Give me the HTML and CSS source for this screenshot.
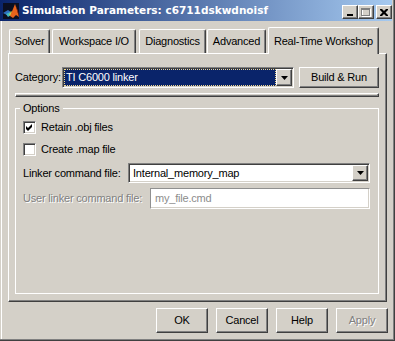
FILE: index.html
```html
<!DOCTYPE html>
<html>
<head>
<meta charset="utf-8">
<title>Simulation Parameters</title>
<link rel="stylesheet" href="styles.css">
</head>
<body>
<div class="window">
  <div class="titlebar">
    <svg class="app-icon" width="16" height="16" viewBox="0 0 16 16">
      <rect width="16" height="16" fill="#0b0f20"/>
      <path d="M0 10 L5 7 L8 9 L4 12 Z" fill="#2f6fc0"/>
      <path d="M3 11 L7 9 L8 12 L5 14 Z" fill="#3fb6c0"/>
      <path d="M6 12 L8 8 L9 9 L8 13 Z" fill="#c8d040"/>
      <path d="M7 13 L10 6 L12 1 L14 7 L16 14 L13 12 L10 15 Z" fill="#e8641c"/>
      <path d="M12 1 L14 7 L16 14 L15 8 Z" fill="#b02a10"/>
    </svg>
    <span class="title-text">Simulation Parameters: c6711dskwdnoisf</span>
    <div class="title-buttons">
      <div class="tb-btn">
        <svg width="8" height="7" viewBox="0 0 8 7"><rect x="1" y="5" width="6" height="2" fill="#000"/></svg>
      </div>
      <div class="tb-btn">
        <svg width="10" height="9" viewBox="0 0 10 9">
          <rect x="1.5" y="1.5" width="8" height="7" fill="none" stroke="#fff"/>
          <rect x="0.5" y="0.5" width="8" height="7" fill="none" stroke="#808080"/>
          <rect x="0" y="1" width="9" height="1" fill="#808080"/>
        </svg>
      </div>
      <div class="tb-btn tb-close">
        <svg width="8" height="7" viewBox="0 0 8 7"><path d="M0 0h2l2 2 2-2h2v1L5.5 3.5 8 6v1H6L4 5 2 7H0V6l2.5-2.5L0 1z" fill="#000"/></svg>
      </div>
    </div>
  </div>

  <div class="tabs">
    <div class="tab tab-solver">Solver</div>
    <div class="tab tab-ws">Workspace I/O</div>
    <div class="tab tab-diag">Diagnostics</div>
    <div class="tab tab-adv">Advanced</div>
    <div class="tab tab-rtw active">Real-Time Workshop</div>
  </div>

  <div class="panel">
    <div class="cat-row">
      <span class="cat-label">Category:</span>
      <div class="combo cat-combo">
        <div class="combo-value selected">TI C6000 linker</div>
        <div class="combo-arrow">
          <svg width="7" height="4" viewBox="0 0 7 4"><path d="M0 0h7L3.5 4z" fill="#000"/></svg>
        </div>
      </div>
      <div class="btn build-btn">Build &amp; Run</div>
    </div>

    <div class="separator"></div>

    <fieldset class="options">
      <legend>Options</legend>
      <div class="check-row first">
        <span class="checkbox">
          <svg width="9" height="9" viewBox="0 0 9 9"><polygon points="1,3 3,5 7,1 7,4 3,8 1,6" fill="#000"/></svg>
        </span>
        <span>Retain .obj files</span>
      </div>
      <div class="check-row">
        <span class="checkbox"></span>
        <span>Create .map file</span>
      </div>
      <div class="field-row linker-row">
        <span class="linker-label">Linker command file:</span>
        <div class="combo linker-combo">
          <div class="combo-value">Internal_memory_map</div>
          <div class="combo-arrow">
            <svg width="7" height="4" viewBox="0 0 7 4"><path d="M0 0h7L3.5 4z" fill="#000"/></svg>
          </div>
        </div>
      </div>
      <div class="field-row user-row">
        <span class="user-label disabled">User linker command file:</span>
        <div class="textfield">my_file.cmd</div>
      </div>
    </fieldset>
  </div>

  <div class="buttons">
    <div class="btn">OK</div>
    <div class="btn">Cancel</div>
    <div class="btn">Help</div>
    <div class="btn disabled">Apply</div>
  </div>
</div>
</body>
</html>
```

FILE: styles.css
```css
* {
  box-sizing: border-box;
}

html,
body {
  margin: 0;
  padding: 0;
}

body {
  width: 395px;
  height: 341px;
  overflow: hidden;
  background: #d4d0c8;
  font-family: "Liberation Sans", Arial, sans-serif;
  font-size: 11px;
  line-height: 13px;
  letter-spacing: -0.2px;
  color: #000;
}

.window {
  width: 395px;
  height: 341px;
  background: #d4d0c8;
  border-right: 1px solid #404040;
  border-bottom: 1px solid #404040;
  box-shadow: inset -1px -1px #808080, inset 1px 0 #d4d0c8, inset 2px 0 #ffffff;
  display: flex;
  flex-direction: column;
}

/* Title bar */
.titlebar {
  height: 21px;
  margin-right: 2px;
  padding-left: 3px;
  background: linear-gradient(to right, #0a246a, #a6caf0);
  display: flex;
  align-items: center;
  color: #fff;
  font-family: "DejaVu Sans", sans-serif;
  font-weight: bold;
  font-size: 10.5px;
  letter-spacing: 0;
}

.app-icon {
  flex: none;
  margin-right: 3px;
}

.title-text {
  flex: 1;
  white-space: nowrap;
}

.title-buttons {
  display: flex;
  align-self: flex-start;
  margin-top: 5px;
}

.tb-btn {
  width: 16px;
  height: 14px;
  background: #d4d0c8;
  border: 1px solid;
  border-color: #fff #404040 #404040 #fff;
  box-shadow: inset -1px -1px #808080;
  display: flex;
  align-items: center;
  justify-content: center;
}

.tb-close {
  margin-left: 2px;
}

/* Tabs */
.tabs {
  display: flex;
  align-items: flex-end;
  height: 26px;
  margin-top: 6px;
  padding-left: 9px;
}

.tab {
  height: 24px;
  padding-top: 5px;
  background: #d4d0c8;
  border-left: 1px solid #fff;
  border-top: 1px solid #fff;
  border-right: 1px solid #404040;
  border-top-left-radius: 2px;
  border-top-right-radius: 2px;
  box-shadow: inset -1px 0 #808080;
  text-align: center;
  white-space: nowrap;
}

.tab-solver { width: 41px; }
.tab-ws { width: 84px; margin-left: 2px; }
.tab-diag { width: 67px; margin-left: 3px; }
.tab-adv { width: 59px; margin-left: 1px; }
.tab-rtw { width: 111px; margin-left: 2px; }

.tab.active {
  height: 27px;
  padding-top: 7px;
  margin-bottom: -1px;
  position: relative;
  z-index: 1;
}

/* Panel */
.panel {
  margin-left: 8px;
  width: 379px;
  height: 249px;
  border-left: 1px solid #fff;
  border-top: 1px solid #fff;
  border-right: 1px solid #404040;
  border-bottom: 1px solid #404040;
  box-shadow: inset -1px -1px #808080;
  padding: 13px 0 0 6px;
}

.cat-row {
  display: flex;
  align-items: center;
  height: 21px;
}

.cat-label {
  width: 47px;
  white-space: nowrap;
}

.combo {
  display: flex;
  background: #fff;
  border: 1px solid;
  border-color: #808080 #fff #fff #808080;
  box-shadow: inset 1px 1px #404040, inset -1px -1px #d4d0c8;
  padding: 1px;
}

.cat-combo {
  width: 232px;
  height: 21px;
}

.combo-value {
  flex: 1;
  display: flex;
  align-items: center;
  padding-left: 2px;
  white-space: nowrap;
}

.combo-value.selected {
  background: #0a246a;
  color: #fff;
  outline: 1px dotted #f0d890;
  outline-offset: -1px;
}

.combo-arrow {
  width: 16px;
  flex: none;
  background: #d4d0c8;
  border: 1px solid;
  border-color: #fff #404040 #404040 #fff;
  box-shadow: inset -1px -1px #808080;
  display: flex;
  align-items: center;
  justify-content: center;
}

.btn {
  width: 52px;
  height: 25px;
  background: #d4d0c8;
  border: 1px solid;
  border-color: #fff #404040 #404040 #fff;
  box-shadow: inset -1px -1px #808080;
  display: flex;
  align-items: center;
  justify-content: center;
  white-space: nowrap;
}

.build-btn {
  width: 80px;
  height: 21px;
  margin-left: 5px;
}

.separator {
  width: 364px;
  height: 4px;
  margin-top: 5px;
  border-top: 1px solid #fff;
  border-left: 1px solid #fff;
  border-right: 1px solid #404040;
  border-bottom: 1px solid #404040;
  box-shadow: inset 0 -1px #808080, inset -1px 0 #808080;
}

/* Options group */
.options {
  margin: 5px 0 0 0;
  width: 364px;
  height: 192px;
  min-width: 0;
  border: 1px solid #fff;
  padding: 0 8px 0 7px;
}

.options legend {
  padding: 0 3px;
  margin-left: -3px;
  line-height: 13px;
}

.check-row {
  display: flex;
  align-items: center;
  height: 13px;
  white-space: nowrap;
}

.check-row.first {
  margin-top: 6px;
}

.check-row + .check-row {
  margin-top: 9px;
}

.checkbox {
  width: 13px;
  height: 13px;
  flex: none;
  margin-right: 5px;
  background: #fff;
  border: 1px solid;
  border-color: #808080 #fff #fff #808080;
  box-shadow: inset 1px 1px #404040, inset -1px -1px #d4d0c8;
  padding: 1px;
  display: flex;
}

.field-row {
  display: flex;
  align-items: center;
  white-space: nowrap;
}

.linker-row {
  margin-top: 7px;
}

.linker-label {
  width: 105px;
}

.linker-combo {
  width: 242px;
  height: 20px;
}

.linker-combo .combo-value {
  padding-left: 3px;
}

.user-row {
  margin-top: 5px;
}

.user-label {
  width: 127px;
}

.disabled {
  color: #808080;
  text-shadow: 1px 1px 0 #fff;
}

.textfield {
  width: 220px;
  height: 21px;
  background: #fff;
  border: 1px solid;
  border-color: #909090 #fff #fff #909090;
  box-shadow: inset -1px -1px #d4d0c8;
  padding-left: 4px;
  display: flex;
  align-items: center;
  color: #8c8c8c;
}

/* Bottom buttons */
.buttons {
  display: flex;
  justify-content: flex-end;
  gap: 8px;
  margin-top: 6px;
  padding-right: 6px;
}
```
